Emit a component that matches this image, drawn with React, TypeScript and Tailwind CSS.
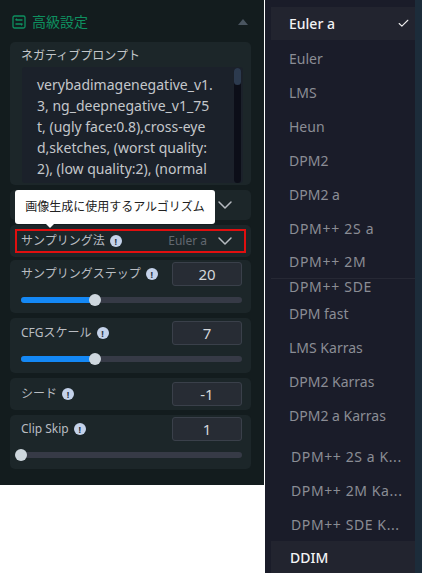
import type { ReactNode } from 'react';
import { ChevronDown, Check } from 'lucide-react';

const font = "font-['Noto_Sans','Noto_Sans_CJK_JP',sans-serif]";

const samplers = [
    { name: 'Euler a', row: 'h-[33px] mt-[7px] bg-[#22242f] text-[#f2f3f5] font-medium', pad: 'pl-[18px]', selected: true },
    { name: 'Euler', row: 'h-[34px] mt-[1px] text-[#8b8d95]', pad: 'pl-[18px]' },
    { name: 'LMS', row: 'h-[34px] text-[#8b8d95]', pad: 'pl-[18px]' },
    { name: 'Heun', row: 'h-[34px] text-[#8b8d95]', pad: 'pl-[18px]' },
    { name: 'DPM2', row: 'h-[34px] text-[#8b8d95]', pad: 'pl-[18px]' },
    { name: 'DPM2 a', row: 'h-[34px] text-[#8b8d95]', pad: 'pl-[18px]' },
    { name: 'DPM++ 2S a', row: 'h-[34px] text-[#8b8d95] tracking-[0.7px]', pad: 'pl-[18px]' },
    { name: 'DPM++ 2M', row: 'h-[34px] text-[#8b8d95] tracking-[0.7px] border-b border-[#262834] -mb-[1px]', pad: 'pl-[18px]' },
    { name: 'DPM++ SDE', row: 'h-[24px] -mt-[5px] text-[#8b8d95] tracking-[0.7px]', pad: 'pl-[18px]' },
    { name: 'DPM fast', row: 'h-[30px] text-[#8b8d95]', pad: 'pl-[18px]' },
    { name: 'LMS Karras', row: 'h-[34px] mt-[2px] text-[#8b8d95]', pad: 'pl-[18px]' },
    { name: 'DPM2 Karras', row: 'h-[34px] text-[#8b8d95]', pad: 'pl-[18px]' },
    { name: 'DPM2 a Karras', row: 'h-[34px] text-[#8b8d95]', pad: 'pl-[18px]' },
    { name: 'DPM++ 2S a K...', row: 'h-[34px] mt-[7px] text-[#8b8d95] tracking-[0.6px]', pad: 'pl-[20px]' },
    { name: 'DPM++ 2M Ka...', row: 'h-[34px] text-[#8b8d95] tracking-[0.6px]', pad: 'pl-[20px]' },
    { name: 'DPM++ SDE K...', row: 'h-[34px] text-[#8b8d95] tracking-[0.6px]', pad: 'pl-[20px]' },
    { name: 'DDIM', row: 'h-[32px] bg-[#22242f] text-[#f2f3f5] font-medium', pad: 'pl-[19px]' },
];

const InfoDot = () => (
    <span className="flex h-[12px] w-[12px] shrink-0 items-center justify-center rounded-full bg-[#c4d2ea] text-[9px] leading-none font-bold text-[#2a3444]">
        !
    </span>
);

const NumberBox = ({ value }: { value: string }) => (
    <div className="flex h-[24px] w-[70px] items-center justify-center rounded-[3px] border border-[#3a404a] bg-[#272c34] text-[15px] text-[#d4d7db]">
        {value}
    </div>
);

const Slider = ({ percent }: { percent: number }) => (
    <div className="relative mt-[11px] h-[6px] w-[221px] rounded-full bg-[#363a46]">
        <div className="h-full rounded-full bg-[#1488f5]" style={{ width: `${percent}%` }} />
        <div
            className="absolute top-[-3px] ml-[-6px] h-[12px] w-[12px] rounded-full bg-[#ced7de]"
            style={{ left: `${percent}%` }}
        />
    </div>
);

const LabelRow = ({ label, value }: { label: string; value: string }) => (
    <div className="flex items-center justify-between">
        <div className="flex items-center gap-[5px] text-[12px] text-[#b9bdc2]">
            {label}
            <InfoDot />
        </div>
        <NumberBox value={value} />
    </div>
);

const Card = ({ className, children }: { className: string; children?: ReactNode }) => (
    <div className={`mx-[10px] w-[241px] rounded-[5px] bg-[#1c2629] ${className}`}>{children}</div>
);

export default function App() {
    return (
        <div className={`flex h-[573px] w-[422px] items-start overflow-hidden bg-white ${font}`}>
            <aside className="h-[485px] w-[264px] shrink-0 bg-[#131c1e]">
                <header className="flex h-[42px] items-center justify-between pt-[1px] pr-[16px] pl-[12px]">
                    <div className="flex items-center gap-[6px] text-[14px] text-[#0e9060]">
                        <svg width="14" height="14" viewBox="0 0 14 14" fill="none" stroke="currentColor" strokeWidth="1.3">
                            <rect x="1" y="1" width="12" height="12" rx="1.5" />
                            <path d="M3.5 5H10.5M3.5 9H10.5M5 3.8L3.5 5M9 10.2L10.5 9" />
                        </svg>
                        高級設定
                    </div>
                    <span className="h-0 w-0 border-x-[5px] border-b-[6px] border-x-transparent border-b-[#4a5560]" />
                </header>

                <Card className="h-[143px] pt-[5px]">
                    <div className="pl-[11px] text-[12px] leading-[18px] text-[#c3c6ca]">ネガティブプロンプト</div>
                    <div className="relative mt-[2px] ml-[12px] h-[116px] w-[221px] overflow-hidden rounded-[3px] bg-[#1b212a] pt-[7px] pr-[30px] pl-[15px] text-[14px] leading-[21px] break-all text-[#c4c7cb]">
                        verybadimagenegative_v1.3, ng_deepnegative_v1_75t, (ugly face:0.8),cross-eyed,sketches, (worst quality:2), (low quality:2), (normal
                        <div className="absolute top-[1px] right-[2px] h-[115px] w-[7px] rounded-full bg-[#0c0e18]">
                            <div className="h-[17px] rounded-full bg-[#2c3a4e]" />
                        </div>
                    </div>
                </Card>

                <Card className="relative mt-[5px] flex h-[30px] items-center justify-end pr-[14px] pb-[1px]">
                    <ChevronDown size={24} strokeWidth={1.5} className="text-[#b6bac0]" />
                </Card>

                <Card className="relative mt-[5px] h-[32px] pt-[4px] pl-[5px]">
                    <div className="flex h-[24px] w-[231px] items-center border-2 border-[#e00f0f] pr-[7px] pl-[4px]">
                        <div className="flex items-center gap-[5px] text-[12px] text-[#b9bdc2]">
                            サンプリング法
                            <InfoDot />
                        </div>
                        <span className="mr-[6px] ml-auto text-[12px] text-[#626870]">Euler a</span>
                        <ChevronDown size={24} strokeWidth={1.5} className="text-[#b6bac0]" />
                    </div>
                    <div className="absolute top-[-35px] left-[5px] flex h-[34px] w-[200px] items-center justify-center rounded-[3px] bg-white text-[12px] text-[#222]">
                        画像生成に使用するアルゴリズム
                        <span className="absolute top-[33px] left-[30px] h-0 w-0 border-x-[5px] border-t-[5px] border-x-transparent border-t-white" />
                    </div>
                </Card>

                <Card className="mt-[3px] h-[53px] pt-[2px] pr-[9px] pl-[11px]">
                    <LabelRow label="サンプリングステップ" value="20" />
                    <Slider percent={33.5} />
                </Card>

                <Card className="mt-[5px] h-[55px] pt-[3px] pr-[9px] pl-[11px]">
                    <LabelRow label="CFGスケール" value="7" />
                    <Slider percent={33.5} />
                </Card>

                <Card className="mt-[5px] h-[32px] pt-[4px] pr-[9px] pl-[11px]">
                    <LabelRow label="シード" value="-1" />
                </Card>

                <Card className="mt-[5px] h-[54px] pt-[2px] pr-[9px] pl-[11px]">
                    <LabelRow label="Clip Skip" value="1" />
                    <Slider percent={0} />
                </Card>
            </aside>

            <div className="ml-[1px] flex h-[573px] w-[157px] shrink-0">
                <nav className="h-full w-[150px] overflow-hidden bg-[#1a1c29] pl-[6px] text-[14px]">
                    {samplers.map(item => (
                        <div key={item.name} className={`flex items-center justify-between pr-[5px] ${item.pad} ${item.row}`}>
                            {item.name}
                            {item.selected && <Check size={13} strokeWidth={2} className="text-[#eeeeee]" />}
                        </div>
                    ))}
                </nav>
                <div className="h-full w-[7px] bg-[#1c2c3a]" />
            </div>
        </div>
    );
}
